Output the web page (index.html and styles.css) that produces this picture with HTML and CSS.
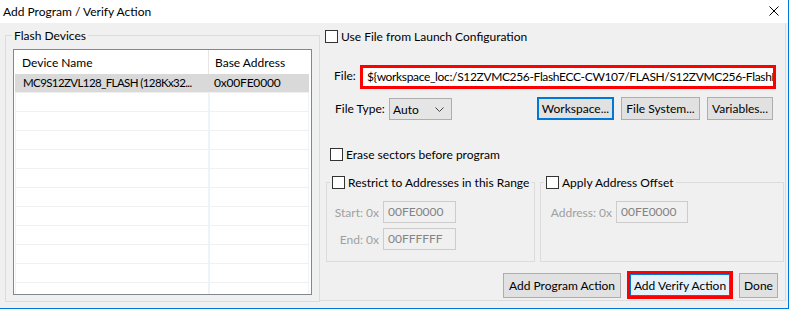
FILE: index.html
```html
<!DOCTYPE html>
<html lang="en">
<head>
  <meta charset="UTF-8" />
  <title>Add Program / Verify Action</title>
  <link rel="stylesheet" href="styles.css">
</head>
<body>
  <div class="window">
    <div class="titlebar">
      <span class="title">Add Program / Verify Action</span>
      <svg class="close" width="10" height="10" viewBox="0 0 10 10">
        <path d="M0.5 0.5 L9.5 9.5 M9.5 0.5 L0.5 9.5" stroke="#000" stroke-width="1" fill="none"/>
      </svg>
    </div>
    <div class="content">
      <div class="group flash">
        <div class="group-head legend">Flash Devices</div>
        <div class="table">
          <div class="thead">
            <div class="col1">Device Name</div>
            <div class="col2">Base Address</div>
          </div>
          <div class="trow selected">
            <div class="col1 tight">MC9S12ZVL128_FLASH (128Kx32...</div>
            <div class="col2">0x00FE0000</div>
          </div>
          <div class="trow"><div class="col1"></div><div class="col2"></div></div>
          <div class="trow"><div class="col1"></div><div class="col2"></div></div>
          <div class="trow"><div class="col1"></div><div class="col2"></div></div>
          <div class="trow"><div class="col1"></div><div class="col2"></div></div>
          <div class="trow"><div class="col1"></div><div class="col2"></div></div>
          <div class="trow"><div class="col1"></div><div class="col2"></div></div>
          <div class="trow"><div class="col1"></div><div class="col2"></div></div>
          <div class="trow"><div class="col1"></div><div class="col2"></div></div>
          <div class="trow"><div class="col1"></div><div class="col2"></div></div>
          <div class="trow"><div class="col1"></div><div class="col2"></div></div>
          <div class="trow"><div class="col1"></div><div class="col2"></div></div>
        </div>
      </div>

      <div class="panel">
        <label class="check-row opt-launch"><span class="box"></span>Use File from Launch Configuration</label>

        <div class="file-row">
          <span class="file-label">File:</span>
          <div class="file-input red">${workspace_loc:/S12ZVMC256-FlashECC-CW107/FLASH/S12ZVMC256-FlashECC-CW107.abs}</div>
        </div>

        <div class="type-row">
          <span class="type-label">File Type:</span>
          <div class="combo">Auto
            <svg class="chev" width="9" height="5" viewBox="0 0 9 5"><path d="M0.5 0.5 L4.5 4.5 L8.5 0.5" stroke="#444" fill="none"/></svg>
          </div>
          <div class="btns">
            <button class="btn focused w-ws">Workspace...</button>
            <button class="btn w-fs">File System...</button>
            <button class="btn w-var">Variables...</button>
          </div>
        </div>

        <label class="check-row opt-erase"><span class="box"></span>Erase sectors before program</label>

        <div class="groups">
          <div class="group range">
            <label class="group-head check-row"><span class="box"></span>Restrict to Addresses in this Range</label>
            <div class="fields range-fields">
              <span class="dim">Start: 0x</span><div class="field">00FE0000</div>
              <span class="dim">End: 0x</span><div class="field">00FFFFFF</div>
            </div>
          </div>
          <div class="group offset">
            <label class="group-head check-row"><span class="box"></span>Apply Address Offset</label>
            <div class="fields offset-fields">
              <span class="dim">Address: 0x</span><div class="field">00FE0000</div>
            </div>
          </div>
        </div>

        <div class="actions">
          <button class="btn big w-prog">Add Program Action</button>
          <div class="red verify-wrap"><button class="btn big verify">Add Verify Action</button></div>
          <button class="btn big w-done">Done</button>
        </div>
      </div>
    </div>
  </div>
</body>
</html>
```
FILE: styles.css
```css
body {
  margin: 0;
  font-family: 'Lato', sans-serif;
  font-size: 12px;
  color: #000;
  background: #fff;
}
.window {
  width: 789px;
  height: 309px;
  box-sizing: border-box;
  border-right: 1px solid #0078d7;
  border-bottom: 1px solid #0078d7;
  background: #f0f0f0;
  display: flex;
  flex-direction: column;
}
.titlebar {
  height: 23px;
  background: #fff;
  display: flex;
  align-items: center;
  padding: 0 9px 0 3px;
  flex-shrink: 0;
}
.title {
  flex: 1;
  line-height: 15px;
  margin-top: -1px;
}
.close {
  margin-top: -1px;
}
.content {
  display: flex;
  align-items: flex-start;
  flex: 1;
}

/* group boxes */
.group {
  border: 1px solid #dcdcdc;
  box-sizing: border-box;
}
.group-head {
  width: fit-content;
  background: #f0f0f0;
  padding: 0 2px;
}
.legend {
  margin: -8px 0 0 6px;
  line-height: 15px;
}

/* flash device list */
.flash {
  width: 315px;
  height: 267px;
  margin: 12px 0 0 5px;
}
.table {
  width: 299px;
  height: 246px;
  box-sizing: border-box;
  margin: 6px 0 0 7px;
  border: 1px solid #828790;
  background: #fff;
  overflow: hidden;
}
.thead {
  display: flex;
  height: 24px;
  align-items: center;
  line-height: 15px;
}
.thead .col1 {
  width: 195px;
  padding-left: 8px;
  box-sizing: border-box;
  align-self: stretch;
  display: flex;
  align-items: center;
  border-right: 1px solid #e5e5e5;
}
.thead .col2 {
  padding-left: 6px;
}
.trow {
  display: flex;
  height: 18px;
  margin: 0 2px 0 1px;
  border-bottom: 1px solid #f0f0f0;
  line-height: 18px;
}
.trow .col1 {
  width: 195px;
  padding-left: 7px;
  box-sizing: border-box;
  border-left: 1px solid #eef2f9;
  border-right: 2px solid #eef2f9;
  white-space: nowrap;
  overflow: hidden;
}
.trow .col2 {
  flex: 1;
  padding-left: 4px;
  border-right: 1px solid #eef2f9;
  letter-spacing: -0.2px;
}
.tight {
  letter-spacing: -0.6px;
  font-size: 11.5px;
}
.trow.selected {
  background: #d9d9d9;
}
.trow.selected .col1,
.trow.selected .col2 {
  border-color: #d9d9d9;
}

/* right side */
.panel {
  width: 466px;
  height: 278px;
  box-sizing: border-box;
  border-right: 1px solid #dcdcdc;
  border-bottom: 1px solid #dcdcdc;
  display: flex;
  flex-direction: column;
}
.check-row {
  display: flex;
  align-items: center;
  gap: 3px;
  line-height: 13px;
}
.box {
  width: 13px;
  height: 13px;
  box-sizing: border-box;
  border: 1px solid #333;
  background: #fff;
  flex-shrink: 0;
}
.opt-launch {
  margin: 7px 0 0 5px;
}
.file-row {
  display: flex;
  margin: 22px 0 0 14px;
}
.file-label {
  width: 26px;
  padding-top: 3px;
}
.red {
  border: 3px solid #f00;
}
.file-input {
  width: 416px;
  height: 24px;
  box-sizing: border-box;
  background: #fff;
  padding-left: 4px;
  line-height: 18px;
  letter-spacing: -0.35px;
  white-space: nowrap;
  overflow: hidden;
}
.type-row {
  display: flex;
  align-items: center;
  margin: 8px 12px 0 15px;
}
.type-label {
  width: 54px;
}
.combo {
  width: 63px;
  height: 22px;
  box-sizing: border-box;
  border: 1px solid #adadad;
  background: #e5e5e5;
  display: flex;
  align-items: center;
  justify-content: space-between;
  padding: 0 7px 0 3px;
  margin-top: 1px;
}
.btns {
  display: flex;
  gap: 7px;
  margin-left: auto;
}
.btn {
  font: inherit;
  color: #000;
  height: 23px;
  padding: 0;
  background: #e1e1e1;
  border: 1px solid #adadad;
  border-radius: 0;
  line-height: 15px;
  white-space: nowrap;
}
.btn.focused {
  border: 2px solid #0078d7;
}
.w-ws { width: 77px; }
.w-fs { width: 79px; }
.w-var { width: 66px; }
.opt-erase {
  margin: 28px 0 0 10px;
}
.groups {
  display: flex;
  gap: 5px;
  margin: 21px 0 0 6px;
}
.groups .group {
  height: 80px;
}
.range {
  width: 209px;
}
.offset {
  width: 244px;
}
.groups .group-head {
  margin: -7px 0 0 3px;
  gap: 3px;
}
.fields {
  display: grid;
  row-gap: 5px;
  column-gap: 4px;
  align-items: center;
  margin-top: 12px;
}
.range-fields {
  grid-template-columns: 52px 73px;
}
.offset-fields {
  grid-template-columns: 71px 72px;
}
.dim {
  color: #a0a0a0;
  text-align: right;
}
.field {
  height: 22px;
  box-sizing: border-box;
  border: 1px solid #cccccc;
  color: #838383;
  padding-left: 4px;
  line-height: 20px;
}
.actions {
  display: flex;
  align-items: center;
  justify-content: flex-end;
  gap: 6px;
  margin: 9px 7px 0 0;
}
.btn.big {
  height: 25px;
}
.w-prog { width: 118px; }
.w-done { width: 39px; }
.verify-wrap {
  width: 106px;
  height: 28px;
  box-sizing: border-box;
}
.btn.verify {
  width: 100%;
  height: 22px;
  background: #e5f1fb;
  border-color: #0078d7;
}
```
